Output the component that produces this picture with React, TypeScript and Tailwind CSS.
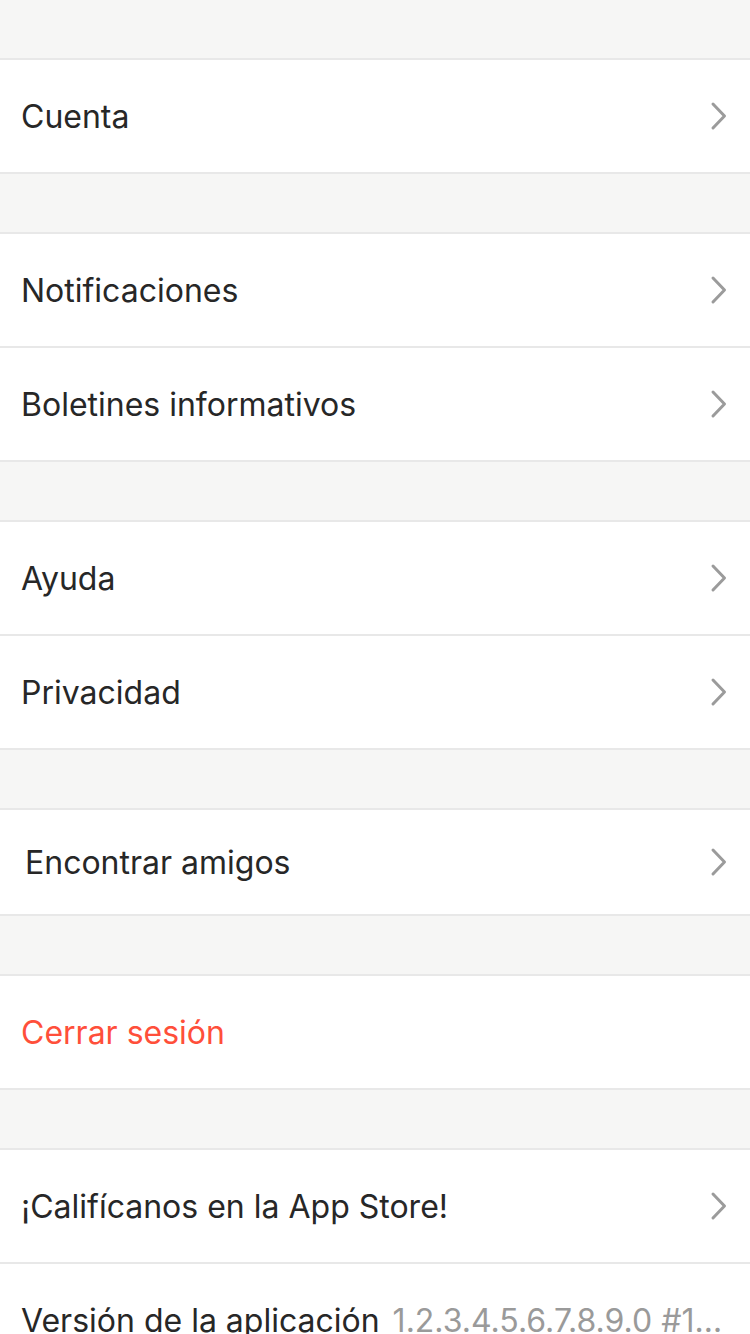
import React from 'react';

const Chevron: React.FC = () => (
    <svg width="18" height="30" viewBox="0 0 18 30" fill="none" className="shrink-0">
        <path d="M3 3L14.5 15L3 27" stroke="#9b9b9b" strokeWidth="3" strokeLinecap="round" strokeLinejoin="round"/>
    </svg>
);

interface RowProps {
    label: string;
    danger?: boolean;
    chevron?: boolean;
    short?: boolean;
    indent?: boolean;
    value?: string;
}

const Row: React.FC<RowProps> = ({ label, danger, chevron = true, short, indent, value }) => (
    <div className={`flex items-center justify-between bg-white border-b-2 border-[#e8e8e8] pr-[22px] ${short ? 'h-[106px]' : 'h-[114px]'} ${indent ? 'pl-[25px]' : 'pl-[21px]'}`}>
        <div className="flex items-baseline gap-[13px] min-w-0 whitespace-nowrap overflow-hidden pt-[2px]">
            <span className={`text-[32px] ${danger ? 'text-[#ff4f3a]' : 'text-[#272727]'}`}>{label}</span>
            {value && <span className="text-[32px] text-[#9a9a9a] truncate">{value}</span>}
        </div>
        {chevron && <Chevron />}
    </div>
);

const Gap: React.FC = () => <div className="h-[60px] bg-[#f6f6f5] border-b-2 border-[#e8e8e8]" />;

const App: React.FC = () => {
    return (
        <div className="w-[750px] h-[1334px] overflow-hidden bg-[#f6f6f5]" style={{ fontFamily: 'Inter, "Noto Sans", sans-serif' }}>
            <Gap />
            <Row label="Cuenta" />
            <Gap />
            <Row label="Notificaciones" />
            <Row label="Boletines informativos" />
            <Gap />
            <Row label="Ayuda" />
            <Row label="Privacidad" />
            <Gap />
            <Row label="Encontrar amigos" short indent />
            <Gap />
            <Row label="Cerrar sesión" danger chevron={false} />
            <Gap />
            <Row label="¡Califícanos en la App Store!" />
            <Row label="Versión de la aplicación" value="1.2.3.4.5.6.7.8.9.0 #1234567" chevron={false} />
        </div>
    );
};

export default App;
